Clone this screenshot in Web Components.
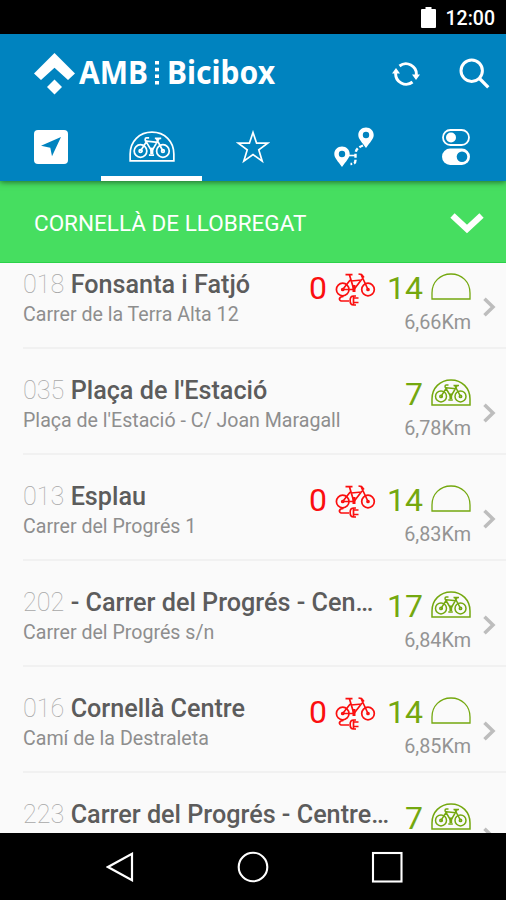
<!DOCTYPE html>
<html lang="ca">
<head>
<meta charset="utf-8">
<title>AMB Bicibox</title>
<style>
    body {
        margin: 0;
        background: #000;
        font-family: Roboto, "Liberation Sans", sans-serif;
    }
</style>
</head>
<body>
<bicibox-app></bicibox-app>

<script>
const bike = `
    <circle cx="10" cy="17.400" r="5.500"/>
    <circle cx="29.500" cy="17.400" r="5.500"/>
    <path d="M17.500 6h-2.300c-1.500 0-1.500 2.500-.2 3.500M10 17.400l5.500-8.600 9.500 1M10 17.400h2M15 9.500l4.800 8M19.800 17.500L26 6.800M29.500 17.400L24 7M22.500 6.500h5.500M17.300 21h4.500"/>
    <path d="M19.800 14.500v5.500" stroke-width="2.800"/>
    <circle cx="10" cy="17.400" r="1.200"/>
    <circle cx="29.500" cy="17.400" r="1.200"/>`;

const icons = {
    battery: [15, 21, `<path fill="currentColor" d="M4.500 0h6v2H14q1 0 1 1v16.800q0 1.200-1 1.200H1q-1 0-1-1.200V3q0-1 1-1h3.500z"/>`],
    logo: [41, 42, `<path fill="currentColor" d="M20.500 0L41 20.500 34 27 20.500 14.800 7 27 0 20.500z"/><path fill="currentColor" d="M20.500 26.500L28 34 20.500 41.500 13 34z"/>`],
    refresh: [28, 26, `<g stroke-width="2.900"><path d="M7.500 5A10.400 10.400 0 0 1 24.300 14"/><path d="M20.500 21A10.400 10.400 0 0 1 3.700 12"/></g>
        <path fill="currentColor" d="M20 13.500h8l-4 5.500zM0 12.500h8L4 7z"/>`],
    search: [31, 31, `<circle cx="12.700" cy="12.700" r="10.700" stroke-width="3"/><path stroke-width="3.300" d="M20 20l9.300 9.300"/>`],
    locate: [34, 34, `<rect width="34" height="34" rx="4" fill="currentColor"/><path fill="#0083bf" d="M27 7L7 15.700l9.300 2.100 1.700 8.500z"/>`],
    station: [40, 27, `<path stroke-width="1.500" d="M1 26V20C1 9 9 1 20 1s19 8 19 19v6z"/><g stroke-width="1.500">${bike}</g>`],
    dome: [40, 27, `<path stroke-width="1.300" d="M1 26V20C1 9 9 1 20 1s19 8 19 19v6z"/>`],
    star: [34, 34, `<path stroke-width="1.700" d="M17 2.500l3.600 10.700h11.100l-8.900 6.700 3.400 11.300L17 24.500l-9.200 6.700 3.400-11.300-8.900-6.700h11.100z"/>`],
    route: [40, 40, `<path fill="currentColor" fill-rule="evenodd" d="M8 19.500c4.500 0 7.700 3.300 7.700 7.400C15.700 31 12 34 8 40 4 34 .3 31 .3 26.900c0-4.100 3.200-7.400 7.700-7.400zm0 4.300a3.200 3.200 0 1 0 0 6.400 3.200 3.200 0 0 0 0-6.400zM32 .5c4.500 0 7.700 3.300 7.700 7.400C39.700 12 36 15 32 21c-4-6-7.700-9-7.700-13.100C24.300 3.800 27.500.5 32 .5zm0 4.300a3.200 3.200 0 1 0 0 6.400 3.200 3.200 0 0 0 0-6.400z"/>
        <path stroke-width="2.400" stroke-dasharray="4 2" d="M29 18.500c-5 2-7.500 4-7.500 9v5.500c0 3-1 4-5 4"/><path stroke-width="1.600" d="M15 28.500h6"/>`],
    toggles: [28, 36, `<rect x="1" y="1" width="26" height="15" rx="7.500" stroke-width="1.800"/><circle cx="9" cy="8.500" r="5" fill="currentColor"/>
        <rect y="19.500" width="28" height="16.500" rx="8.200" fill="currentColor"/><circle cx="20" cy="27.700" r="5.300" fill="#0083bf"/>`],
    down: [34, 23, `<path stroke-width="6.300" d="M2.500 3.500L17 17 31.500 3.500"/>`],
    next: [13, 20, `<path stroke-width="3.500" d="M1.500 1.800L10 10l-8.500 8.200"/>`],
    ebike: [41, 33, `<g stroke-width="1.700"><circle cx="7.700" cy="16.500" r="6.300"/><circle cx="33" cy="16.500" r="6.300"/>
        <circle cx="7.700" cy="16.500" r="1"/><circle cx="33" cy="16.500" r="1"/>
        <path d="M10.500 1.700h7M14.500 2l4.500 15M7.700 16.500l7.500-9.500M7.700 16.500H19l8-10.500M16 8l11-1M33 16.500L26 1.500M23.500 1l3 .5 2.500 3"/>
        <path stroke-width="3" d="M19 12v7"/>
        <path d="M8.500 23.500c-5 0-5.500 4.500-1 4.500h6.500M21 23h-2.500c-4.500 0-4.500 9 0 9H21M18.500 23v8.500M19 25h4.500M19 29.500h4.500"/></g>`],
    back: [28, 30, `<path stroke-width="2.200" d="M26 1.800v26.400L2 15z"/>`],
    home: [32, 32, `<circle cx="16" cy="16" r="14.300" stroke-width="2.100"/>`],
    recent: [32, 32, `<rect x="2" y="2" width="28.500" height="28.500" stroke-width="2.100"/>`]
};

class BoxIcon extends HTMLElement {
    connectedCallback() {
        const [w, h, shapes] = icons[this.getAttribute("name")];
        const width = this.getAttribute("width") || w;
        this.attachShadow({ mode: "open" });
        this.shadowRoot.innerHTML = `
<style>
    :host {
        display: block;
        flex: none;
    }

    svg {
        display: block;
        fill: none;
        stroke: none;
    }

    [stroke-width] {
        stroke: currentColor;
    }
</style>
<svg width="${width}" height="${h * width / w}" viewBox="0 0 ${w} ${h}">${shapes}</svg>`;
    }
}

class StatusBar extends HTMLElement {
    constructor() {
        super();
        this.attachShadow({ mode: "open" });
        this.shadowRoot.innerHTML = `
<style>
    :host {
        display: flex;
        align-items: center;
        justify-content: flex-end;
        gap: 10px;
        height: 34px;
        padding-right: 11px;
        box-sizing: border-box;
        background: #000;
        color: #fff;
        font-size: 19.5px;
        font-weight: 500;
    }

    span {
        padding-top: 2px;
    }
</style>
<box-icon name="battery"></box-icon>
<span><slot></slot></span>`;
    }
}

class AppHeader extends HTMLElement {
    constructor() {
        super();
        this.attachShadow({ mode: "open" });
        this.shadowRoot.innerHTML = `
<style>
    :host {
        display: block;
        height: 147px;
        background: #0083bf;
        color: #fff;
        position: relative;
        z-index: 1;
        box-shadow: 0 1px 6px rgba(0, 0, 0, .55);
    }

    .top {
        display: flex;
        align-items: center;
        height: 79px;
        padding: 0 16px 0 34px;
    }

    .brand {
        margin: 0 auto 0 3px;
        display: block;
        font-family: "Noto Sans", "Open Sans", sans-serif;
        font-size: 32px;
        font-weight: 700;
        fill: #fff;
    }

    .top box-icon + box-icon {
        margin-left: 39px;
    }

    nav {
        display: grid;
        grid-template-columns: repeat(5, 1fr);
        height: 68px;
    }

    nav div {
        display: flex;
        align-items: center;
        justify-content: center;
        padding-top: 4px;
        border-bottom: 5px solid transparent;
    }

    nav .active {
        border-color: #fff;
    }

    nav [name="toggles"] {
        padding-left: 2px;
    }
</style>
<div class="top">
    <box-icon name="logo"></box-icon>
    <svg class="brand" width="200" height="54">
        <text x="1" y="37" textLength="69" lengthAdjust="spacingAndGlyphs">AMB</text>
        <path d="M77 14h4v3.500h-4zM77 20.700h4v3.500h-4zM77 27.400h4v3.500h-4zM77 34h4v3.500h-4z"/>
        <text x="89" y="37" textLength="108" lengthAdjust="spacingAndGlyphs">Bicibox</text>
    </svg>
    <box-icon name="refresh"></box-icon>
    <box-icon name="search"></box-icon>
</div>
<nav>
    <div><box-icon name="locate"></box-icon></div>
    <div class="active"><box-icon name="station" width="46"></box-icon></div>
    <div><box-icon name="star"></box-icon></div>
    <div><box-icon name="route"></box-icon></div>
    <div><box-icon name="toggles"></box-icon></div>
</nav>`;
    }
}

class CityPicker extends HTMLElement {
    constructor() {
        super();
        this.attachShadow({ mode: "open" });
        this.shadowRoot.innerHTML = `
<style>
    :host {
        display: flex;
        align-items: center;
        justify-content: space-between;
        height: 82px;
        padding: 3px 22px 0 34px;
        box-sizing: border-box;
        border-bottom: 1px solid #2bd249;
        background: #46de60;
        color: #fff;
        font-size: 22.5px;
    }
</style>
<span><slot></slot></span>
<box-icon name="down"></box-icon>`;
    }
}

class StationRow extends HTMLElement {
    connectedCallback() {
        const bikes = this.getAttribute("bikes");
        const slots = this.getAttribute("slots");
        this.attachShadow({ mode: "open" });
        this.shadowRoot.innerHTML = `
<style>
    :host {
        display: flex;
        height: 106px;
        margin-left: 23px;
        padding-right: 10px;
        box-sizing: border-box;
        border-bottom: 2px solid #f1f1f1;
    }

    .info {
        flex: 1;
        min-width: 0;
        padding-top: 27px;
        white-space: nowrap;
    }

    .name {
        color: #5c5c5c;
        font-size: 25.2px;
        font-weight: 500;
        line-height: 30px;
    }

    .code {
        color: #a8a8a8;
        font-weight: 100;
    }

    .address {
        padding-top: 1px;
        color: #8e8e8e;
        font-size: 19.6px;
        line-height: 28px;
    }

    .status {
        padding-top: 27px;
    }

    .counts {
        display: flex;
        justify-content: flex-end;
        height: 39px;
        color: #74a80f;
        font-size: 32px;
        line-height: 37px;
    }

    .counts box-icon {
        margin: 3px 0 0 8px;
    }

    .empty {
        display: flex;
        margin-right: 11px;
        color: #fb0f0f;
    }

    .distance {
        color: #949494;
        font-size: 19.8px;
        line-height: 28px;
        text-align: right;
    }

    .next {
        margin: 54px 0 0 12px;
        color: #bdbdbd;
    }
</style>
<div class="info">
    <div class="name"><span class="code">${this.getAttribute("code")}</span> <slot></slot></div>
    <div class="address">${this.getAttribute("address")}</div>
</div>
<div class="status">
    <div class="counts">
        ${slots ? `<div class="empty">${bikes}<box-icon name="ebike"></box-icon></div>${slots}<box-icon name="dome"></box-icon>`
            : `${bikes}<box-icon name="station"></box-icon>`}
    </div>
    <div class="distance">${this.getAttribute("distance")}</div>
</div>
<box-icon class="next" name="next"></box-icon>`;
    }
}

class StationList extends HTMLElement {
    constructor() {
        super();
        this.attachShadow({ mode: "open" });
        this.shadowRoot.innerHTML = `
<style>
    :host {
        display: block;
        height: 570px;
        overflow: hidden;
        background: #fafafa;
    }

    /* list is scrolled a little past its first row */
    .scroll {
        margin-top: -20px;
    }
</style>
<div class="scroll"><slot></slot></div>`;
    }
}

class NavBar extends HTMLElement {
    constructor() {
        super();
        this.attachShadow({ mode: "open" });
        this.shadowRoot.innerHTML = `
<style>
    :host {
        display: flex;
        align-items: center;
        justify-content: space-between;
        height: 67px;
        padding: 0 103px 0 106px;
        box-sizing: border-box;
        background: #000;
        color: #fff;
    }
</style>
<box-icon name="back"></box-icon>
<box-icon name="home"></box-icon>
<box-icon name="recent"></box-icon>`;
    }
}

class BiciboxApp extends HTMLElement {
    constructor() {
        super();
        this.attachShadow({ mode: "open" });
        this.shadowRoot.innerHTML = `
<style>
    :host {
        display: block;
        width: 506px;
        height: 900px;
        overflow: hidden;
    }
</style>
<status-bar>12:00</status-bar>
<app-header></app-header>
<city-picker>CORNELLÀ DE LLOBREGAT</city-picker>
<station-list>
    <station-row code="018" bikes="0" slots="14" distance="6,66Km" address="Carrer de la Terra Alta 12">Fonsanta i Fatjó</station-row>
    <station-row code="035" bikes="7" distance="6,78Km" address="Plaça de l'Estació - C/ Joan Maragall">Plaça de l'Estació</station-row>
    <station-row code="013" bikes="0" slots="14" distance="6,83Km" address="Carrer del Progrés 1">Esplau</station-row>
    <station-row code="202" bikes="17" distance="6,84Km" address="Carrer del Progrés s/n">- Carrer del Progrés - Cen…</station-row>
    <station-row code="016" bikes="0" slots="14" distance="6,85Km" address="Camí de la Destraleta">Cornellà Centre</station-row>
    <station-row code="223" bikes="7" distance="" address="">Carrer del Progrés - Centre…</station-row>
</station-list>
<nav-bar></nav-bar>`;
    }
}

customElements.define("box-icon", BoxIcon);
customElements.define("status-bar", StatusBar);
customElements.define("app-header", AppHeader);
customElements.define("city-picker", CityPicker);
customElements.define("station-row", StationRow);
customElements.define("station-list", StationList);
customElements.define("nav-bar", NavBar);
customElements.define("bicibox-app", BiciboxApp);
</script>
</body>
</html>
